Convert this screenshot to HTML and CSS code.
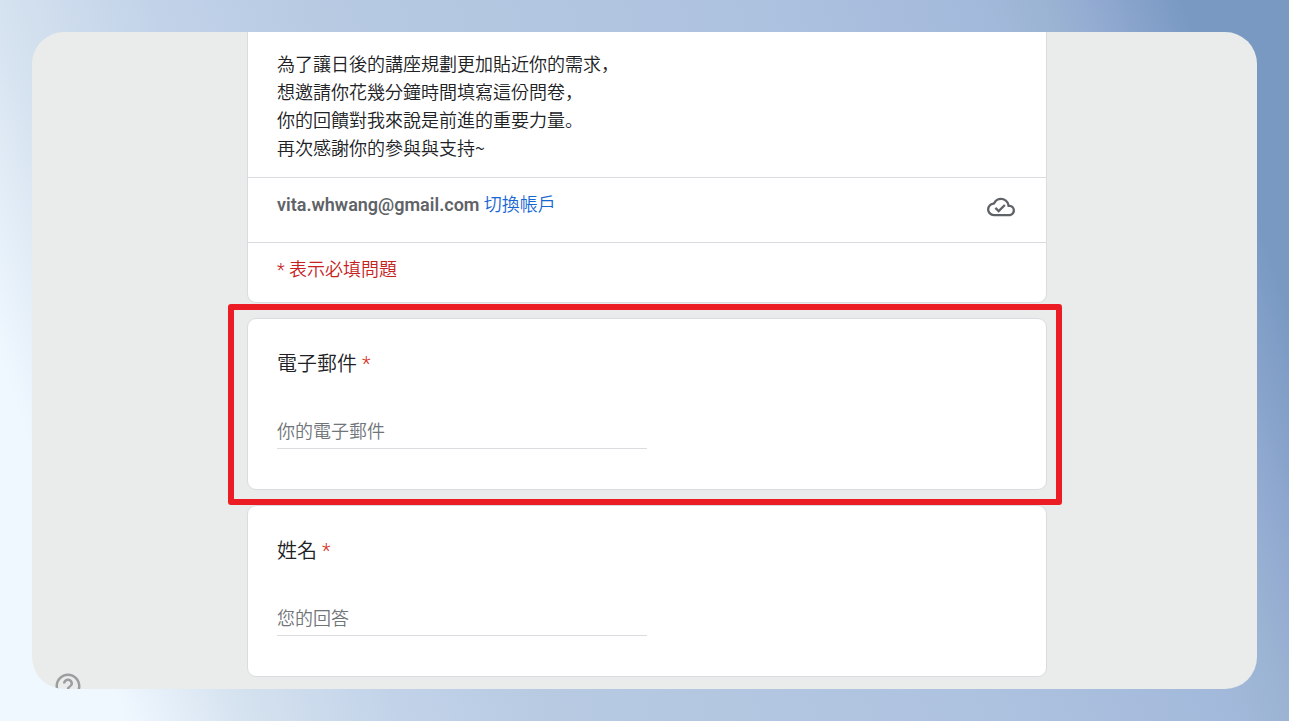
FILE: index.html
```html
<!DOCTYPE html>
<html lang="zh-Hant">
<head>
    <meta charset="UTF-8">
    <meta name="viewport" content="width=device-width, initial-scale=1.0">
    <title>講座回饋問卷</title>
    <link rel="stylesheet" href="styles.css">
</head>
<body>
    <main class="window">
        <form class="form">
            <section class="card intro">
                <p class="description">
                    為了讓日後的講座規劃更加貼近你的需求，<br>
                    想邀請你花幾分鐘時間填寫這份問卷，<br>
                    你的回饋對我來說是前進的重要力量。<br>
                    再次感謝你的參與與支持~
                </p>
                <div class="account">
                    <p><strong>vita.whwang@gmail.com</strong> <a href="#">切換帳戶</a></p>
                    <svg class="cloud" viewBox="0 0 24 24" role="img" aria-label="已儲存">
                        <path d="M19.35 10.04A7.49 7.49 0 0 0 12 4C9.11 4 6.6 5.64 5.35 8.04A5.994 5.994 0 0 0 0 14c0 3.31 2.69 6 6 6h13c2.76 0 5-2.24 5-5 0-2.64-2.05-4.78-4.65-4.96zM19 18H6c-2.21 0-4-1.79-4-4 0-2.05 1.53-3.76 3.56-3.97l1.07-.11.5-.95A5.469 5.469 0 0 1 12 6c2.62 0 4.88 1.86 5.39 4.43l.3 1.5 1.53.11A2.98 2.98 0 0 1 22 15c0 1.65-1.35 3-3 3zm-9-3.82l-2.09-2.09L6.5 13.5 10 17l6.01-6.01-1.41-1.41z"/>
                    </svg>
                </div>
                <p class="required-note">* 表示必填問題</p>
            </section>

            <section class="card question highlighted">
                <label for="email">電子郵件 <span class="star">*</span></label>
                <input type="email" id="email" placeholder="你的電子郵件" required>
            </section>

            <section class="card question">
                <label for="name">姓名 <span class="star">*</span></label>
                <input type="text" id="name" placeholder="您的回答" required>
            </section>
        </form>

        <button type="button" class="help" aria-label="說明">
            <svg viewBox="0 0 24 24">
                <path d="M11 18h2v-2h-2v2zm1-16C6.48 2 2 6.48 2 12s4.48 10 10 10 10-4.48 10-10S17.52 2 12 2zm0 18c-4.41 0-8-3.59-8-8s3.59-8 8-8 8 3.59 8 8-3.59 8-8 8zm0-14c-2.21 0-4 1.79-4 4h2c0-1.1.9-2 2-2s2 .9 2 2c0 2-3 1.75-3 5h2c0-2.25 3-2.5 3-5 0-2.21-1.79-4-4-4z"/>
            </svg>
        </button>
    </main>
</body>
</html>
```
FILE: styles.css
```css
* {
    margin: 0;
    padding: 0;
    box-sizing: border-box;
}

body {
    height: 100vh;
    padding: 32px;
    overflow: hidden;
    font-family: Roboto, "Noto Sans CJK TC", sans-serif;
    font-size: 18px;
    font-weight: 350;
    line-height: 28px;
    color: #202124;
    background: linear-gradient(71deg, #f0f8ff 8%, #d5e2ef 16%, #c2d3e9 26%, #b7cae2 36%, #adc2df 65%, #a3b9db 80%, #9bb4d3 84%, #93abd1 87%, #7999c3 93%);
}

.window {
    position: relative;
    height: 100%;
    padding: 0 24px 0 29px;
    overflow: hidden;
    border-radius: 32px;
    background: #eaeceb;
}

.form {
    display: flex;
    flex-direction: column;
    gap: 15px;
    max-width: 800px;
    margin: 0 auto;
}

.card {
    position: relative;
    border: 1px solid #dadce0;
    border-radius: 9px;
    background: white;
}

.intro {
    border-top: none;
    border-radius: 0 0 9px 9px;
}

/* commas and full stops sit at the lower left */
.description {
    padding: 17px 29px 16px;
    border-bottom: 1px solid #dadce0;
    font-family: "Noto Sans CJK JP", sans-serif;
    font-feature-settings: "locl" 0;
}

.account {
    display: flex;
    justify-content: space-between;
    padding: 13px 31px 23px 29px;
    border-bottom: 1px solid #dadce0;
    color: #5f6368;
}

.account strong {
    font-weight: 600;
}

.account a {
    color: #1967d2;
    text-decoration: none;
}

.cloud {
    width: 28px;
    height: 28px;
    margin-top: 2px;
    margin-bottom: -2px;
    fill: #5f6368;
}

.required-note {
    padding: 13px 29px 18px;
    color: #c5221f;
}

.question {
    display: flex;
    flex-direction: column;
    align-items: flex-start;
    gap: 36px;
    padding: 31px 29px 40px;
}

.question label {
    font-size: 20px;
}

.star {
    color: #d93025;
}

.question input {
    width: 50%;
    height: 35px;
    border: none;
    border-bottom: 1px solid #dadce0;
    outline: none;
    background: none;
    font: inherit;
    color: inherit;
}

.question input::placeholder {
    color: #70757a;
    opacity: 1;
}

/* red frame around the question to fill in */
.highlighted::after {
    content: "";
    position: absolute;
    z-index: 1;
    inset: -15px -16px -16px -20px;
    border: 6px solid #ec1c24;
    border-radius: 3px;
    pointer-events: none;
}

.help {
    position: absolute;
    left: 21px;
    bottom: -12px;
    width: 30px;
    height: 30px;
    border: none;
    background: none;
    cursor: pointer;
}

.help svg {
    display: block;
    width: 30px;
    height: 30px;
    fill: #9b9d9f;
}
```
